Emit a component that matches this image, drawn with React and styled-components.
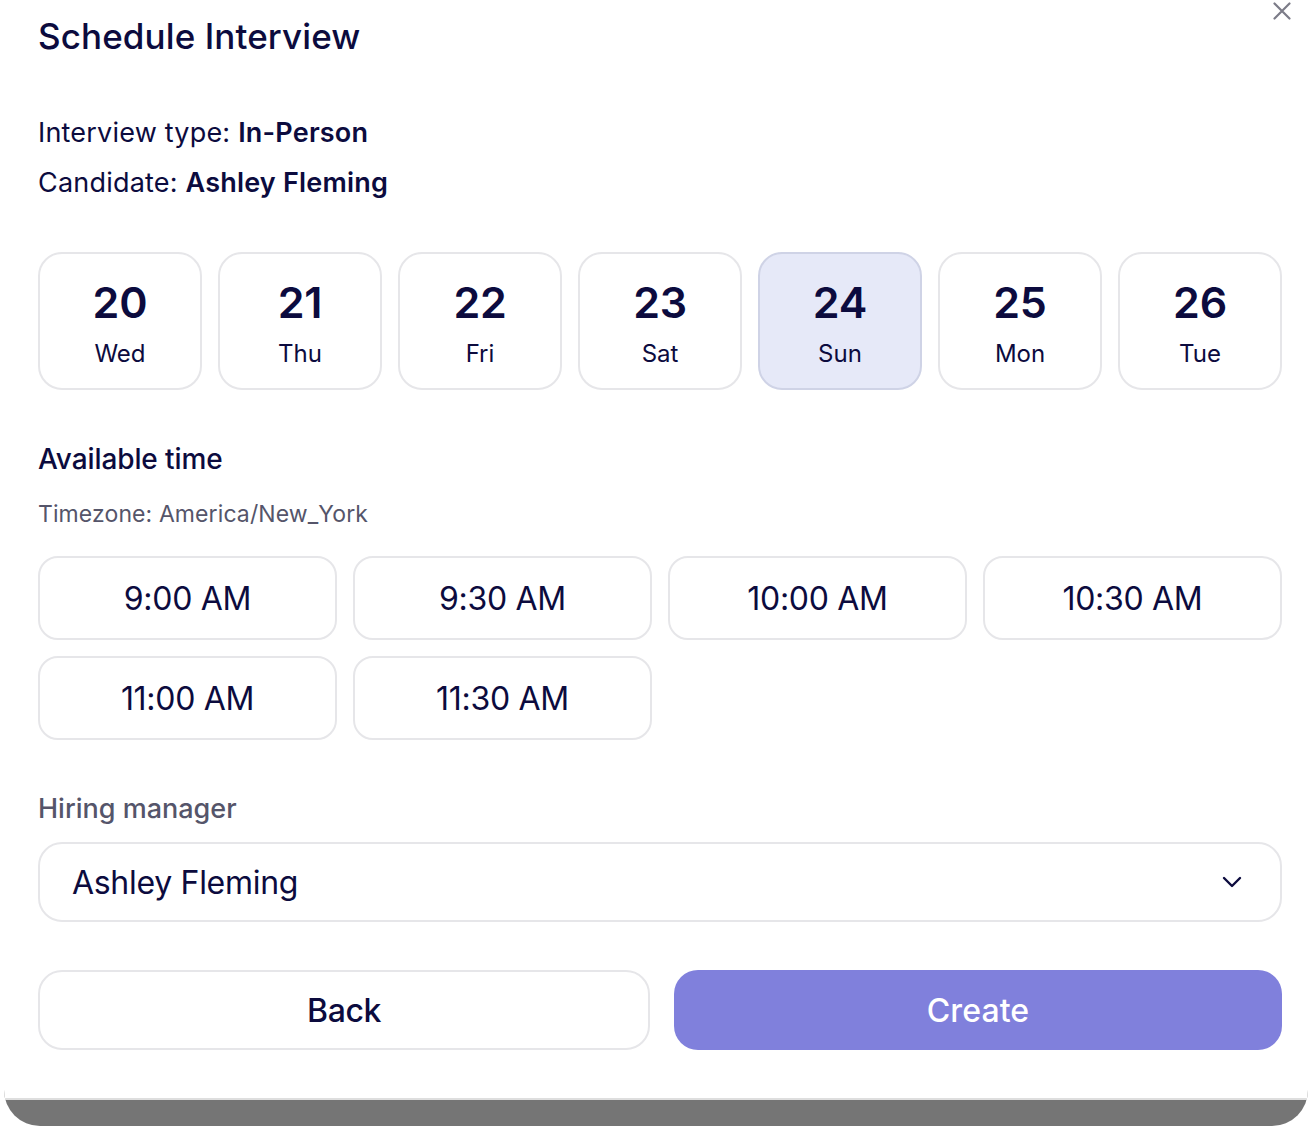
import React from "react";
import styled, { createGlobalStyle } from "styled-components";

const GlobalStyle = createGlobalStyle`
  html, body {
    margin: 0;
    padding: 0;
    background: #fff;
  }
  * {
    box-sizing: border-box;
  }
`;

const Shell = styled.div`
  width: 1304px;
  height: 1126px;
  margin-left: 4px;
  background: #757575;
  border-radius: 0 0 36px 36px;
  overflow: hidden;
  font-family: Inter, "Liberation Sans", sans-serif;
  color: #0c0b3e;
`;

const Panel = styled.div`
  position: relative;
  height: 1100px;
  padding: 0 26px 0 34px;
  background: #fff;
  border-bottom: 2px solid #dedede;
`;

const CloseIcon = styled.svg`
  position: absolute;
  top: 2px;
  right: 17px;
  width: 18px;
  height: 18px;
  stroke: #7c7c88;
  stroke-width: 2.2;
  stroke-linecap: round;
`;

const Title = styled.h1`
  margin: 0;
  padding-top: 14px;
  height: 108px;
  font-size: 35px;
  line-height: 45px;
  font-weight: 500;
  letter-spacing: 0.1px;
`;

const Info = styled.p`
  margin: 0;
  height: 50px;
  font-size: 27px;
  line-height: 50px;
  font-weight: 400;
  letter-spacing: 0.2px;

  b {
    font-weight: 600;
  }
`;

const DayRow = styled.div`
  display: grid;
  grid-template-columns: repeat(7, 1fr);
  gap: 16px;
  margin-top: 44px;
`;

const DayCard = styled.div`
  height: 138px;
  display: flex;
  flex-direction: column;
  align-items: center;
  padding-top: 20px;
  border: 2px solid ${props => (props.$selected ? "#cfd3e6" : "#e6e6e9")};
  border-radius: 24px;
  background: ${props => (props.$selected ? "#e6e9f8" : "#fff")};
`;

const DayNumber = styled.div`
  font-size: 43px;
  line-height: 56px;
  font-weight: 600;
  letter-spacing: -0.2px;
`;

const DayName = styled.div`
  margin-top: 8px;
  font-size: 24px;
  line-height: 32px;
`;

const SectionTitle = styled.h2`
  margin: 51px 0 0;
  font-size: 28px;
  line-height: 36px;
  font-weight: 500;
  letter-spacing: -0.1px;
`;

const Timezone = styled.div`
  margin-top: 19px;
  font-size: 23px;
  line-height: 36px;
  color: #55556a;
  letter-spacing: 0.1px;
`;

const TimeGrid = styled.div`
  display: grid;
  grid-template-columns: repeat(4, 1fr);
  gap: 16px;
  margin-top: 24px;
`;

const TimeSlot = styled.div`
  height: 84px;
  display: flex;
  align-items: center;
  justify-content: center;
  border: 2px solid #e6e6e9;
  border-radius: 20px;
  font-size: 32px;
  letter-spacing: -0.3px;
`;

const Label = styled.div`
  margin-top: 51px;
  font-size: 27px;
  line-height: 36px;
  font-weight: 500;
  color: #55556a;
`;

const Select = styled.div`
  height: 80px;
  margin-top: 15px;
  padding: 0 36px 0 32px;
  display: flex;
  align-items: center;
  justify-content: space-between;
  border: 2px solid #e6e6e9;
  border-radius: 24px;
  font-size: 32px;
  letter-spacing: -0.3px;
`;

const Chevron = styled.svg`
  width: 24px;
  height: 24px;
  fill: none;
  stroke: #0c0b3e;
  stroke-width: 2.4;
  stroke-linecap: round;
  stroke-linejoin: round;
`;

const Actions = styled.div`
  display: grid;
  grid-template-columns: 612px 608px;
  gap: 24px;
  margin-top: 48px;
`;

const Button = styled.button`
  height: 80px;
  border: ${props => (props.$primary ? "none" : "2px solid #e6e6e9")};
  border-radius: 24px;
  background: ${props => (props.$primary ? "#8080dc" : "#fff")};
  color: ${props => (props.$primary ? "#fff" : "#0c0b3e")};
  font-family: inherit;
  font-size: 32px;
  font-weight: 500;
  letter-spacing: ${props => (props.$primary ? "0.1px" : "-0.4px")};
`;

const days = [
  ["20", "Wed"],
  ["21", "Thu"],
  ["22", "Fri"],
  ["23", "Sat"],
  ["24", "Sun"],
  ["25", "Mon"],
  ["26", "Tue"],
];

const times = ["9:00 AM", "9:30 AM", "10:00 AM", "10:30 AM", "11:00 AM", "11:30 AM"];

const App = () => (
  <>
    <GlobalStyle />
    <Shell>
      <Panel>
        <CloseIcon viewBox="0 0 18 18">
          <path d="M1.5 1.5 16.5 16.5M16.5 1.5 1.5 16.5" />
        </CloseIcon>
        <Title>Schedule Interview</Title>
        <Info>Interview type: <b>In-Person</b></Info>
        <Info>Candidate: <b>Ashley Fleming</b></Info>
        <DayRow>
          {days.map(([num, name]) => (
            <DayCard key={num} $selected={num === "24"}>
              <DayNumber>{num}</DayNumber>
              <DayName>{name}</DayName>
            </DayCard>
          ))}
        </DayRow>
        <SectionTitle>Available time</SectionTitle>
        <Timezone>Timezone: America/New_York</Timezone>
        <TimeGrid>
          {times.map(t => <TimeSlot key={t}>{t}</TimeSlot>)}
        </TimeGrid>
        <Label>Hiring manager</Label>
        <Select>
          Ashley Fleming
          <Chevron viewBox="0 0 24 24">
            <path d="M4 8 12 16 20 8" />
          </Chevron>
        </Select>
        <Actions>
          <Button>Back</Button>
          <Button $primary>Create</Button>
        </Actions>
      </Panel>
    </Shell>
  </>
);

export default App;
